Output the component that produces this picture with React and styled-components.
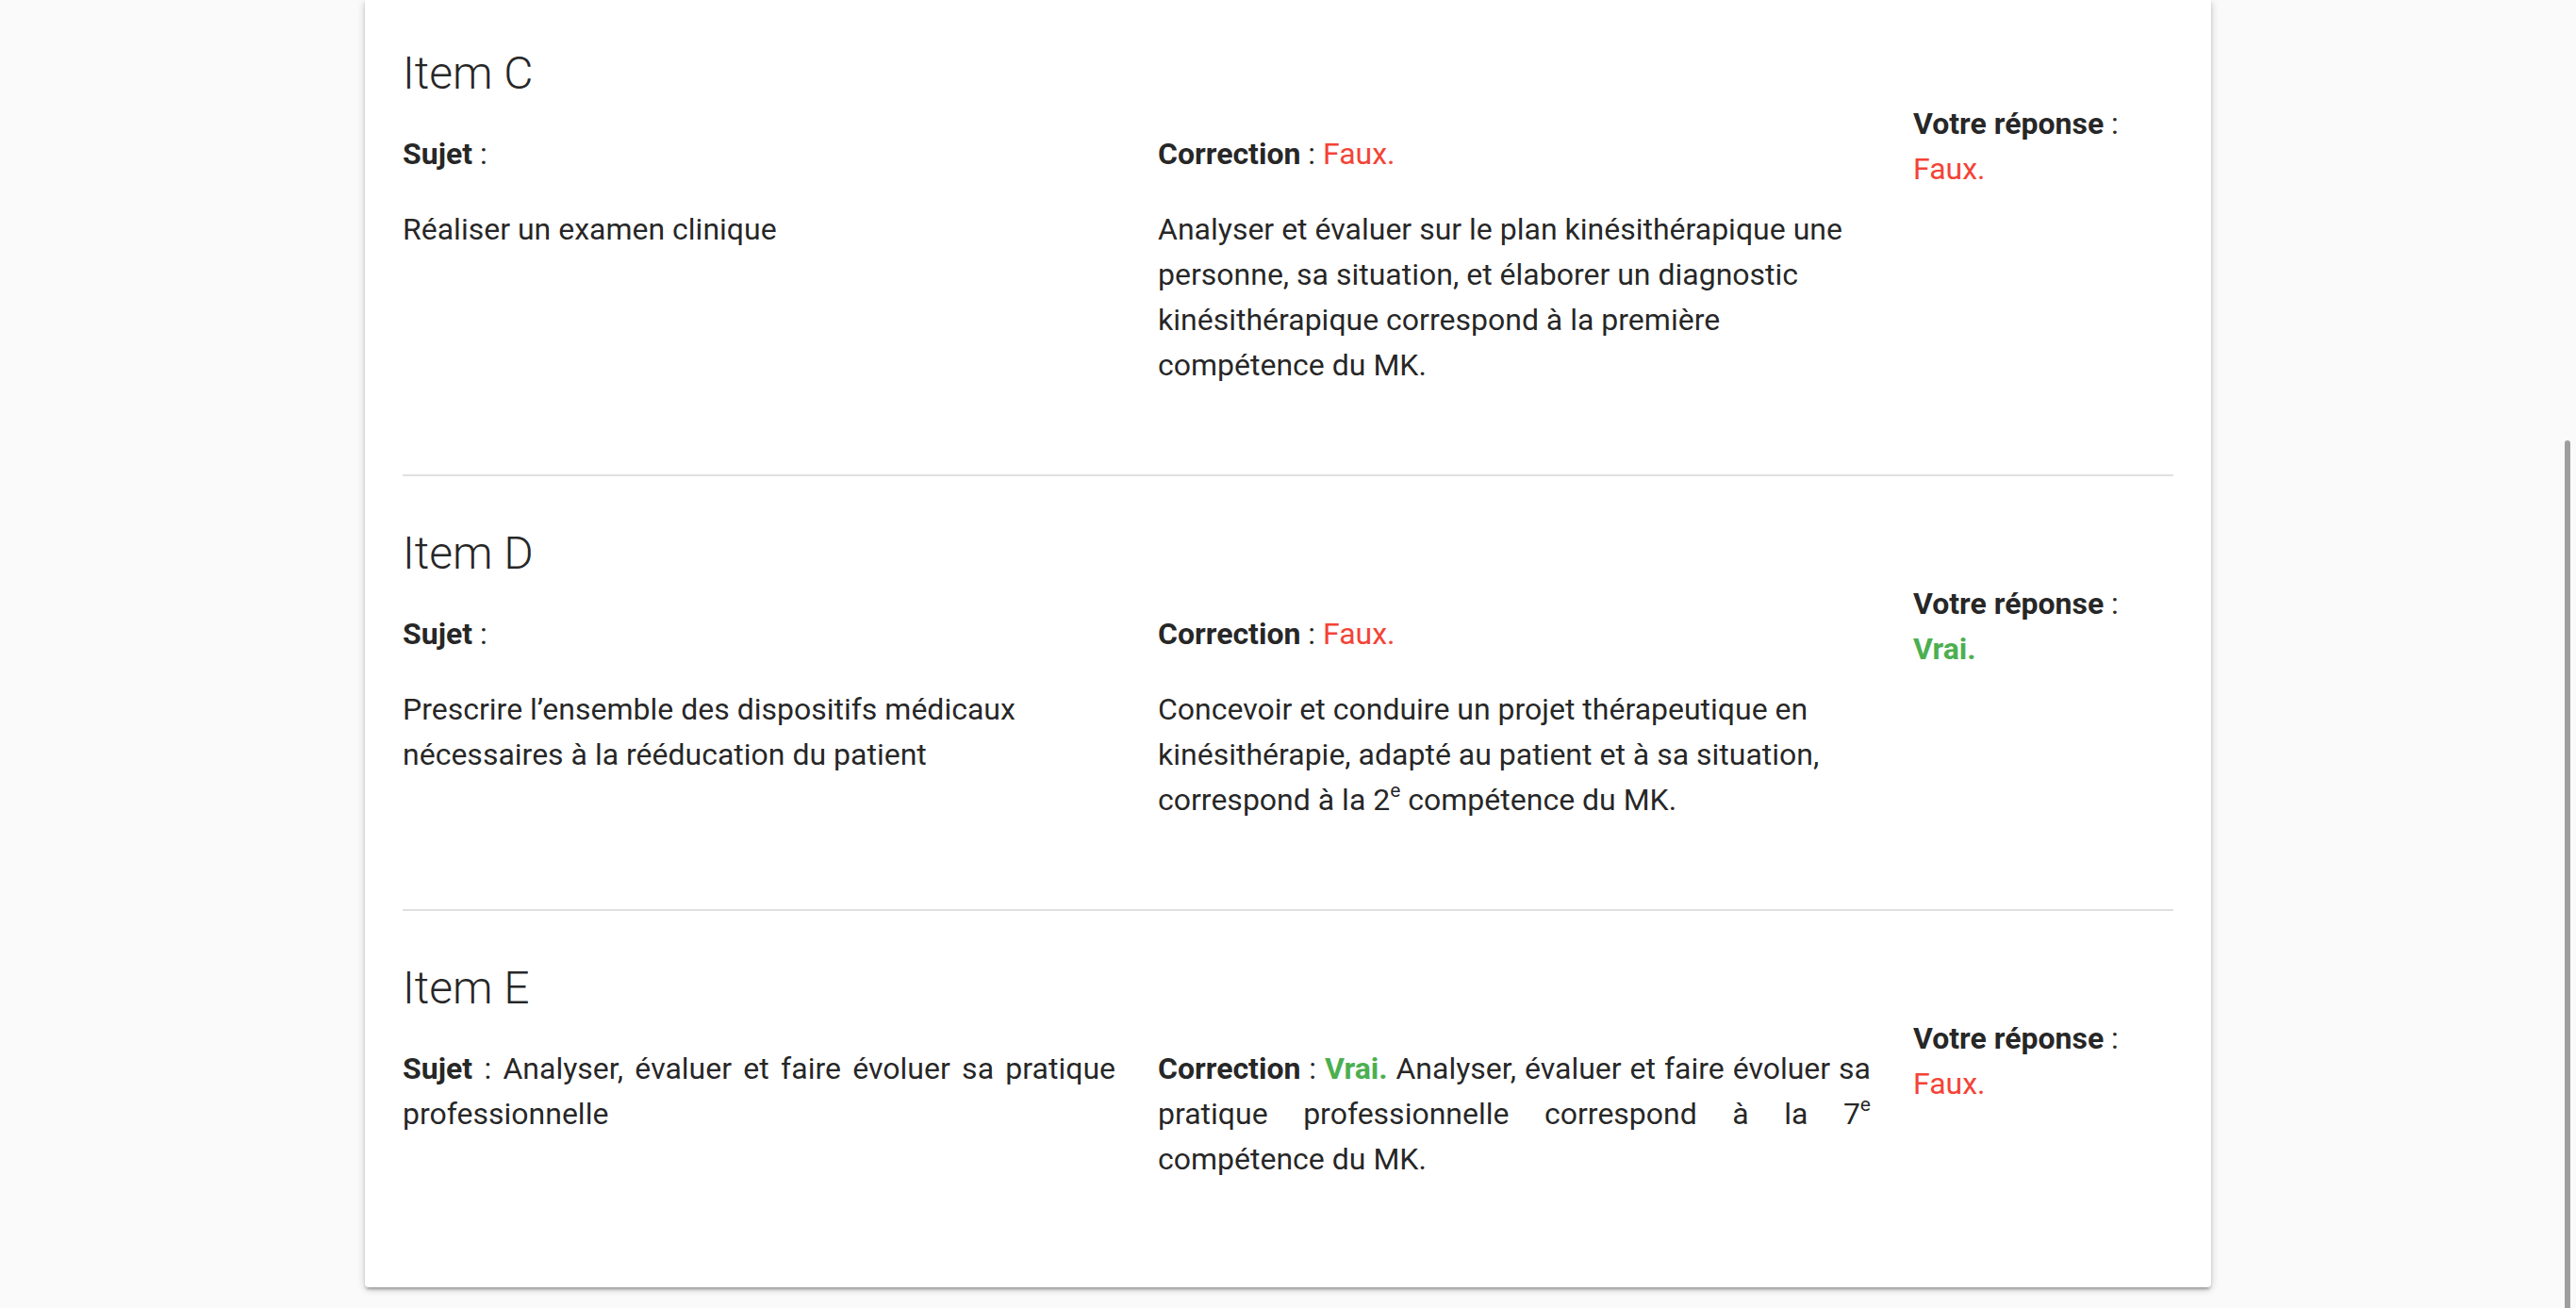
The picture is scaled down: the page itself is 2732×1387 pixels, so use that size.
import React from "react";
import styled, { createGlobalStyle } from "styled-components";

const GlobalStyle = createGlobalStyle`
  html, body {
    margin: 0;
    padding: 0;
    background: #fafafa;
  }
  body {
    font-family: Roboto, "Noto Sans", "Liberation Sans", sans-serif;
    color: rgba(0, 0, 0, 0.87);
    overflow: hidden;
  }
`;

const Page = styled.main`
  display: flex;
  justify-content: center;
  min-height: 100vh;
  background: #fafafa;
`;

const Card = styled.article`
  width: 1958px;
  box-sizing: border-box;
  align-self: flex-start;
  background: #ffffff;
  border-radius: 0 0 4px 4px;
  padding: 0 40px 20px;
  box-shadow: 0 3px 3px 0 rgba(0, 0, 0, 0.14), 0 5px 2px -3px rgba(0, 0, 0, 0.12),
    0 2px 9px 0 rgba(0, 0, 0, 0.2);
`;

const Section = styled.section`
  padding: ${(p) => (p.$first ? "49px" : "53px")} 0 92px;
  border-bottom: ${(p) => (p.$last ? "none" : "2px solid #e0e0e0")};
`;

const Title = styled.h3`
  margin: 0;
  font-family: Roboto, "Liberation Sans", sans-serif;
  font-weight: 300;
  font-size: 48px;
  line-height: 58px;
  color: rgba(0, 0, 0, 0.87);
`;

const Row = styled.div`
  display: grid;
  grid-template-columns: 756px 756px 1fr;
  column-gap: 45px;
  align-items: start;
`;

const Col = styled.div`
  min-width: 0;
`;

const Para = styled.p`
  margin: 32px 0 0;
  font-size: 32px;
  line-height: 48px;
  font-weight: 400;
  text-align: ${(p) => (p.$justify ? "justify" : "left")};
`;

const AnswerBlock = styled.div`
  display: flex;
  flex-direction: column;
  font-size: 32px;
  line-height: 48px;
`;

const Label = styled.strong`
  font-weight: 700;
  color: rgba(0, 0, 0, 0.87);
`;

const Verdict = styled.span`
  color: ${(p) => (p.$ok ? "#4caf50" : "#f44336")};
  font-weight: ${(p) => (p.$ok ? 700 : 400)};
`;

const Sup = styled.sup`
  font-size: 21px;
  line-height: 0;
  vertical-align: 0;
  position: relative;
  top: -14px;
`;

const ScrollThumb = styled.div`
  position: fixed;
  right: 6px;
  top: 467px;
  bottom: 0;
  width: 6px;
  border-radius: 3px 3px 0 0;
  background: #9e9e9e;
`;

const Answer = ({ ok }) => (
  <AnswerBlock>
    <span>
      <Label>Votre réponse</Label> :
    </span>
    <Verdict $ok={ok}>{ok ? "Vrai." : "Faux."}</Verdict>
  </AnswerBlock>
);

export default function App() {
  return (
    <>
      <GlobalStyle />
      <Page>
        <Card>
          <Section $first>
            <Title>Item C</Title>
            <Row>
              <Col>
                <Para>
                  <Label>Sujet</Label> :
                </Para>
                <Para>Réaliser un examen clinique</Para>
              </Col>
              <Col>
                <Para>
                  <Label>Correction</Label> : <Verdict>Faux.</Verdict>
                </Para>
                <Para>
                  Analyser et évaluer sur le plan kinésithérapique une personne, sa
                  situation, et élaborer un diagnostic kinésithérapique correspond à
                  la première compétence du MK.
                </Para>
              </Col>
              <Col>
                <Answer ok={false} />
              </Col>
            </Row>
          </Section>

          <Section>
            <Title>Item D</Title>
            <Row>
              <Col>
                <Para>
                  <Label>Sujet</Label> :
                </Para>
                <Para>
                  Prescrire l’ensemble des dispositifs médicaux nécessaires à la
                  rééducation du patient
                </Para>
              </Col>
              <Col>
                <Para>
                  <Label>Correction</Label> : <Verdict>Faux.</Verdict>
                </Para>
                <Para>
                  Concevoir et conduire un projet thérapeutique en kinésithérapie,
                  adapté au patient et à sa situation, correspond à la 2<Sup>e</Sup>{" "}
                  compétence du MK.
                </Para>
              </Col>
              <Col>
                <Answer ok={true} />
              </Col>
            </Row>
          </Section>

          <Section $last>
            <Title>Item E</Title>
            <Row>
              <Col>
                <Para $justify>
                  <Label>Sujet</Label> : Analyser, évaluer et faire évoluer sa
                  pratique professionnelle
                </Para>
              </Col>
              <Col>
                <Para $justify>
                  <Label>Correction</Label> : <Verdict $ok>Vrai.</Verdict> Analyser,
                  évaluer et faire évoluer sa pratique professionnelle correspond à
                  la 7<Sup>e</Sup> compétence du MK.
                </Para>
              </Col>
              <Col>
                <Answer ok={false} />
              </Col>
            </Row>
          </Section>
        </Card>
      </Page>
      <ScrollThumb />
    </>
  );
}
